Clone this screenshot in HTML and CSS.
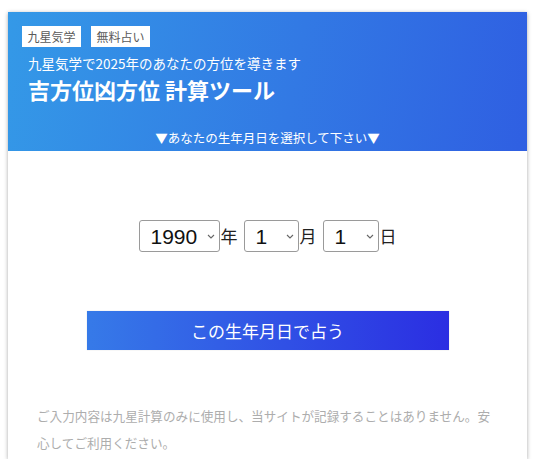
FILE: index.html
```html
<!DOCTYPE html>
<html lang="ja">
<head>
<meta charset="utf-8">
<title>吉方位凶方位 計算ツール</title>
<link rel="stylesheet" href="styles.css">
</head>
<body>
<div class="card">
  <header class="hero">
    <div class="tags">
      <span class="tag">九星気学</span>
      <span class="tag">無料占い</span>
    </div>
    <p class="sub">九星気学で2025年のあなたの方位を導きます</p>
    <h1 class="title">吉方位凶方位 計算ツール</h1>
    <p class="guide">▼あなたの生年月日を選択して下さい▼</p>
  </header>
  <main class="body">
    <div class="dates">
      <span class="sel sel-y">
        <select><option>1990</option></select>
        <svg class="chev" width="8" height="5" viewBox="0 0 8 5"><path d="M1 1l3 3 3-3" fill="none" stroke="#666" stroke-width="1.1"/></svg>
      </span>
      <span class="lbl">年</span>
      <span class="sel sel-m">
        <select><option>1</option></select>
        <svg class="chev" width="8" height="5" viewBox="0 0 8 5"><path d="M1 1l3 3 3-3" fill="none" stroke="#666" stroke-width="1.1"/></svg>
      </span>
      <span class="lbl">月</span>
      <span class="sel sel-d">
        <select><option>1</option></select>
        <svg class="chev" width="8" height="5" viewBox="0 0 8 5"><path d="M1 1l3 3 3-3" fill="none" stroke="#666" stroke-width="1.1"/></svg>
      </span>
      <span class="lbl">日</span>
    </div>
    <button class="go">この生年月日で占う</button>
    <p class="note">ご入力内容は九星計算のみに使用し、当サイトが記録することはありません。安心してご利用ください。</p>
  </main>
</div>
</body>
</html>
```
FILE: styles.css
```css
* { box-sizing: border-box; }
html, body { margin: 0; padding: 0; background: #fff; }
body {
  font-family: "Noto Sans CJK JP", "Noto Sans", sans-serif;
  color: #222;
}
.card {
  width: 519px;
  margin: 12px 0 0 8px;
  background: #fff;
  box-shadow: 0 1px 4px rgba(0,0,0,0.35);
}
.hero {
  background: linear-gradient(100deg, #3499e7 0%, #3279e4 55%, #2f5fe2 100%);
  color: #fff;
  padding: 14px 14px 3px;
  display: flex;
  flex-direction: column;
}
.tags { display: flex; gap: 10px; }
.tag {
  background: #fff;
  color: #5a5a5a;
  font-size: 12px;
  line-height: 21px;
  height: 21px;
  padding: 0 5.5px;
}
.sub {
  margin: 6px 0 0 6px;
  font-size: 13.5px;
  line-height: 20px;
}
.title {
  margin: 1px 0 0 6px;
  font-size: 22px;
  line-height: 30px;
  font-weight: 700;
}
.guide {
  margin: 24px 0 0;
  text-align: center;
  font-size: 12.5px;
  line-height: 20px;
}
.body {
  display: flex;
  flex-direction: column;
  align-items: center;
  padding: 69px 0 3px;
}
.dates {
  display: flex;
  align-items: center;
  height: 32px;
}
.sel { position: relative; display: block; height: 32px; }
.sel select {
  appearance: none;
  -webkit-appearance: none;
  height: 32px;
  border: 1px solid #9a9a9a;
  border-radius: 3px;
  background: #fff;
  font-family: "Liberation Sans", Arial, sans-serif;
  font-size: 21px;
  color: #111;
  padding: 0 0 0 11px;
  margin: 0;
}
.sel-y select { width: 81px; }
.sel-m select { width: 55px; }
.sel-d select { width: 56px; }
.chev { position: absolute; right: 5px; top: 14px; }
.lbl {
  font-size: 17px;
  line-height: 32px;
  margin: 0 6px 0 1px;
}
.lbl:last-child { margin-right: 0; }
.go {
  margin-top: 59px;
  width: 362px;
  height: 39px;
  border: 0;
  border-radius: 0;
  background: linear-gradient(90deg, #367ae8 0%, #3050e5 55%, #2b2ee2 100%);
  color: #fff;
  font-family: "Noto Sans CJK JP", sans-serif;
  font-size: 17px;
  box-shadow: 0 0 1px rgba(0,0,0,0.2);
}
.note {
  align-self: stretch;
  margin: 52px 0 0;
  padding: 0 28px 0 29px;
  font-size: 12.6px;
  line-height: 27px;
  color: #adadad;
}
```
